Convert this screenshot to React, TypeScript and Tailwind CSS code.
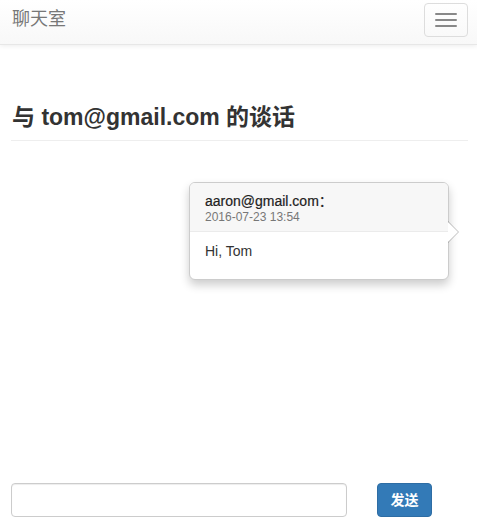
const App = () => {
  return (
    <div className="min-h-[525px] bg-white flex flex-col font-['Liberation_Sans','Noto_Sans_CJK_SC',sans-serif] text-[14px] text-[#333]">
      {/* Navbar */}
      <div className="h-[45px] flex items-start justify-between pl-[12px] pr-[9px] bg-gradient-to-b from-white to-[#f8f8f8] border-b border-[#e7e7e7] shadow-[0_1px_5px_rgba(0,0,0,0.08)]">
        <span className="mt-[9px] text-[18px] leading-[20px] text-[#777]">聊天室</span>
        <button className="mt-[3px] w-[44px] h-[34px] border border-[#ddd] rounded-[4px] flex flex-col items-center justify-center gap-[4px]">
          <span className="block w-[22px] h-[2px] bg-[#888] rounded-[1px]" />
          <span className="block w-[22px] h-[2px] bg-[#888] rounded-[1px]" />
          <span className="block w-[22px] h-[2px] bg-[#888] rounded-[1px]" />
        </button>
      </div>

      {/* Heading */}
      <div className="pl-[11px] pr-[9px] mt-[60px]">
        <h1 className="pl-[1px] text-[23px] leading-[25px] font-bold text-[#333] pb-[10px] border-b border-[#eee]">
          与 tom@gmail.com 的谈话
        </h1>
      </div>

      {/* Messages */}
      <div className="flex-1 flex justify-end pr-[28px] pt-[41px]">
        <div className="relative w-[260px] h-[98px] bg-white border border-[#ccc] rounded-[6px] shadow-[0_5px_10px_rgba(0,0,0,0.2)]">
          <div className="bg-[#f7f7f7] border-b border-[#ebebeb] rounded-t-[5px] px-[15px] pt-[10px] pb-[7px]">
            <div className="text-[14px] leading-[16px] text-[#222] [-webkit-text-stroke:0.2px_#222]">aaron@gmail.com：</div>
            <div className="text-[12px] leading-[14px] text-[#777] mt-[1px]">2016-07-23 13:54</div>
          </div>
          <div className="px-[15px] pt-[10px] text-[14px] leading-[18px] text-[#333]">Hi, Tom</div>
          {/* arrow */}
          <div className="absolute top-[38px] right-[-11px] w-0 h-0 border-y-[11px] border-y-transparent border-l-[11px] border-l-[rgba(0,0,0,0.25)]" />
          <div className="absolute top-[39px] right-[-10px] w-0 h-0 border-y-[10px] border-y-transparent border-l-[10px] border-l-white" />
        </div>
      </div>

      {/* Input bar */}
      <div className="flex items-center pl-[11px] pb-[8px] gap-[30px]">
        <input className="w-[336px] h-[34px] border border-[#ccc] rounded-[4px] shadow-[inset_0_1px_1px_rgba(0,0,0,0.075)] px-[12px] outline-none" />
        <button className="w-[55px] h-[34px] bg-[#337ab7] border border-[#2e6da4] rounded-[4px] text-white text-[14px] font-bold">
          发送
        </button>
      </div>
    </div>
  )
}

export default App
